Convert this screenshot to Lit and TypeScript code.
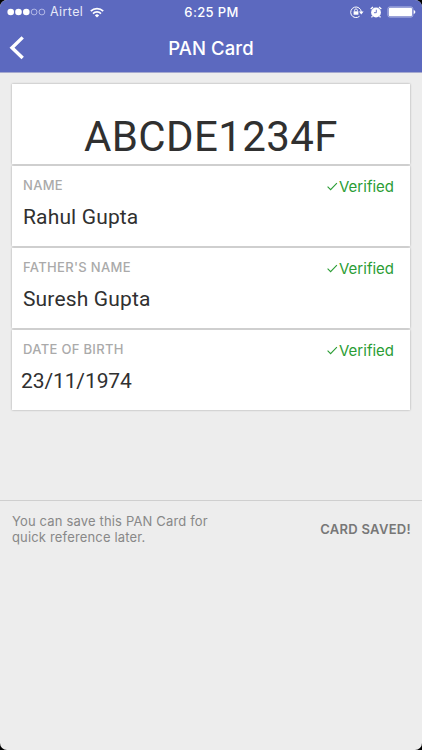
import { LitElement, html, css, svg } from "lit";
import { customElement, property } from "lit/decorators.js";

@customElement("status-bar")
class StatusBar extends LitElement {
  static styles = css`
    :host { display: grid; grid-template-columns: 1fr auto 1fr; height: 24px; align-items: center; color: #fff; font-size: 12.5px; line-height: 24px; }
    .left { display: flex; align-items: center; padding-left: 7px; }
    .right { display: flex; align-items: center; justify-content: flex-end; padding-right: 6px; }
    .carrier { margin: 0 7px 0 4px; letter-spacing: 0.4px; color: #e6e8f7; }
    .time { font-size: 13px; font-weight: 500; letter-spacing: 0.35px; margin-left: 1px; }
    .lock { margin-right: 6px; }
    .alarm { margin-right: 5px; }
    svg { display: block; }
  `;
  render() {
    return html`
      <div class="left">
        <svg width="39" height="8" viewBox="0 0 39 8" fill="#fff">
          ${[0, 1, 2, 3, 4].map((i) =>
            i < 3
              ? svg`<circle cx=${3.7 + i * 7.8} cy="4" r="3.3" />`
              : svg`<circle cx=${3.7 + i * 7.8} cy="4" r="2.9" fill="none" stroke="#c9cdf0" stroke-width="0.8" />`
          )}
        </svg>
        <span class="carrier">Airtel</span>
        <svg width="14" height="11" viewBox="0 0 14 11" fill="none" stroke="#fff" stroke-width="1.7">
          <path d="M0.8 4.1a8.8 8.8 0 0 1 12.4 0M3 6.6a5.7 5.7 0 0 1 8 0" />
          <path d="M7 10.6L4.9 8.4a3 3 0 0 1 4.2 0z" fill="#fff" stroke="none" />
        </svg>
      </div>
      <div class="time">6:25 PM</div>
      <div class="right">
        <svg class="lock" width="14" height="12" viewBox="0 0 14 12" fill="none" stroke="#fff">
          <path d="M9.6 10.2A5.3 5.3 0 1 1 11.3 6" stroke-width="1" />
          <path d="M8.9 5.6h4.7l-2.35 2.8z" fill="#fff" stroke="none" />
          <rect x="3.6" y="5.3" width="4.8" height="3.4" fill="#fff" stroke="none" />
          <path d="M4.6 5.4V4.3a1.4 1.4 0 0 1 2.8 0v1.1" stroke-width="0.9" />
        </svg>
        <svg class="alarm" width="12" height="12" viewBox="0 0 12 12">
          <circle cx="6" cy="6.5" r="4.9" fill="#fff" />
          <path d="M0.7 3.1L3 1M11.3 3.1L9 1M2.5 10.1l-1 1.2M9.5 10.1l1 1.2" stroke="#fff" stroke-width="1.3" />
          <path d="M6.3 3.7v3H4" fill="none" stroke="#5c69bf" stroke-width="0.9" />
        </svg>
        <svg width="29" height="12" viewBox="0 0 29 12">
          <rect x="0.9" y="0.9" width="25" height="10.2" rx="2" fill="none" stroke="#bdc3ea" stroke-width="0.8" />
          <rect x="1.8" y="1.8" width="23.2" height="8.4" rx="1.2" fill="#fff" />
          <path d="M26.7 4q1.7 0.4 1.7 2t-1.7 2z" fill="#fff" />
        </svg>
      </div>
    `;
  }
}

@customElement("detail-card")
class DetailCard extends LitElement {
  @property() label = "";
  @property() value = "";
  static styles = css`
    :host { display: block; box-sizing: border-box; height: 80px; padding: 11px 16px 0 11px; background: #fff; box-shadow: 0 0 2px rgba(0, 0, 0, 0.32); }
    .top { display: flex; justify-content: space-between; height: 20px; }
    .label { font-size: 13px; font-weight: 500; line-height: 17px; letter-spacing: 0.32px; color: #aaa; }
    .verified { display: flex; align-items: center; font-size: 15px; line-height: 20px; color: #2b9d35; }
    .value { margin-top: 7px; font: 21px/26px Roboto, sans-serif; letter-spacing: 0.15px; color: #303030; }
    .numeric { margin-left: -2px; letter-spacing: -0.1px; }
  `;
  render() {
    return html`
      <div class="top">
        <span class="label">${this.label}</span>
        <span class="verified">
          <svg width="12" height="10" viewBox="0 0 12 10" fill="none" stroke="#2b9d35" stroke-width="1.1">
            <path d="M0.6 4.7l3 3L9.9 1.2" />
          </svg>Verified
        </span>
      </div>
      <div class=${/^\d/.test(this.value) ? "value numeric" : "value"}>${this.value}</div>
    `;
  }
}

@customElement("app-root")
class AppRoot extends LitElement {
  static styles = css`
    :host { display: block; height: 750px; background: #000; font-family: Inter, "Liberation Sans", sans-serif; }
    .screen { height: 750px; overflow: hidden; border-radius: 7px; background: #ededed; }
    .header { box-sizing: border-box; height: 73px; background: #5c69bf; border-bottom: 1px solid #a5a9cf; }
    .nav { display: grid; grid-template-columns: 60px 1fr 60px; height: 48px; align-items: center; }
    .back { display: block; margin-left: 9px; }
    .title { text-align: center; color: #fff; font-size: 18.5px; font-weight: 500; line-height: 24px; letter-spacing: 0.1px; }
    .cards { display: flex; flex-direction: column; gap: 2px; padding: 11px 12px 0; }
    .number { box-sizing: border-box; height: 80px; padding-top: 28px; background: #fff; box-shadow: 0 0 2px rgba(0, 0, 0, 0.32); text-align: center; font: 42px/50px Roboto, sans-serif; letter-spacing: 0.4px; color: #303030; }
    .footer { display: flex; justify-content: space-between; margin-top: 90px; padding: 12px 11px 0 12px; border-top: 1px solid #cfcfcf; }
    .note { font-size: 13px; line-height: 16px; color: #888; letter-spacing: 0.16px; }
    .saved { padding-top: 8px; font-size: 13px; font-weight: 600; line-height: 16px; color: #777; letter-spacing: 0.3px; }
  `;
  render() {
    return html`
      <div class="screen">
        <div class="header">
          <status-bar></status-bar>
          <div class="nav">
            <svg class="back" width="16" height="24" viewBox="0 0 16 24" fill="none" stroke="#fff" stroke-width="3.4">
              <path d="M13.7 1.4L3 11.7 13.7 22" />
            </svg>
            <div class="title">PAN Card</div>
          </div>
        </div>
        <div class="cards">
          <div class="number">ABCDE1234F</div>
          <detail-card label="NAME" value="Rahul Gupta"></detail-card>
          <detail-card label="FATHER'S NAME" value="Suresh Gupta"></detail-card>
          <detail-card label="DATE OF BIRTH" value="23/11/1974"></detail-card>
        </div>
        <div class="footer">
          <div class="note">You can save this PAN Card for<br />quick reference later.</div>
          <div class="saved">CARD SAVED!</div>
        </div>
      </div>
    `;
  }
}
